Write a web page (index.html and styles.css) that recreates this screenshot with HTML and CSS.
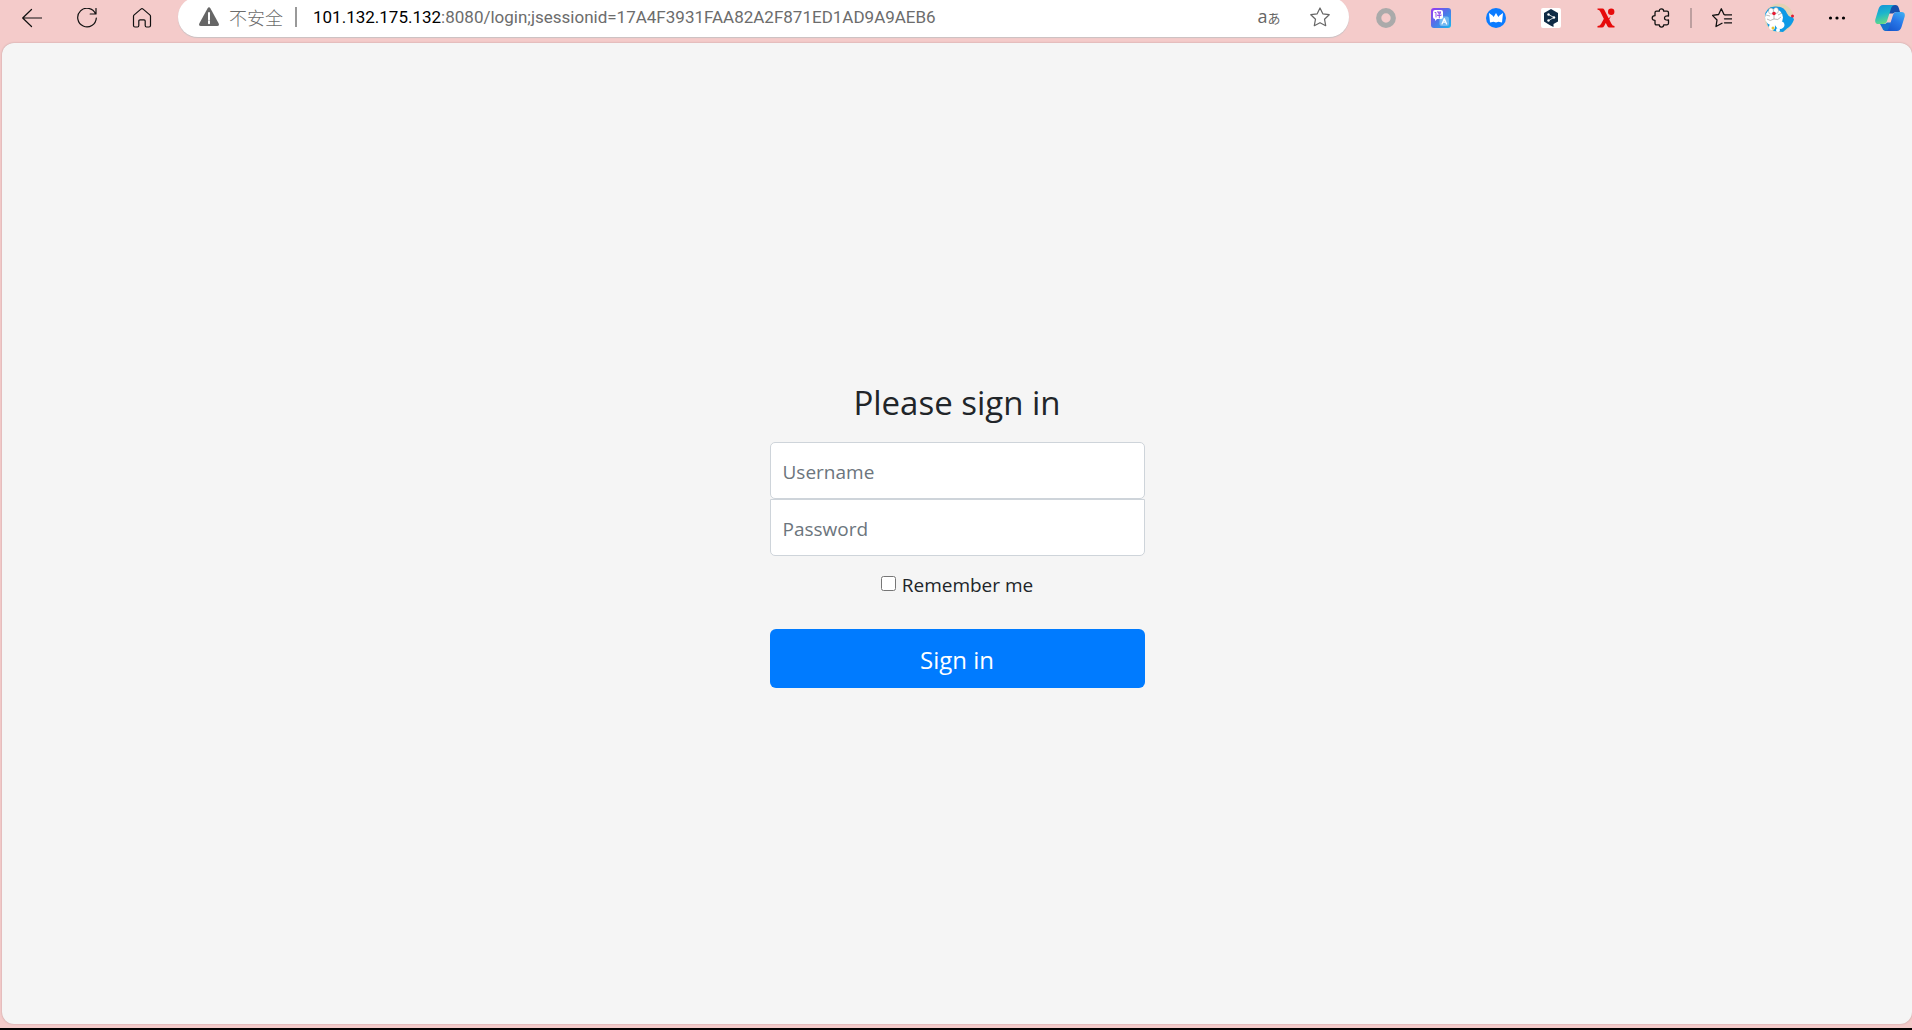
FILE: index.html
```html
<!DOCTYPE html>
<html lang="en">
<head>
<meta charset="UTF-8">
<meta name="viewport" content="width=device-width, initial-scale=1.0">
<title>Please sign in</title>
<link rel="stylesheet" href="styles.css">
</head>
<body>

    <header class="toolbar">
        <nav class="nav-buttons">
            <button type="button" class="tool" aria-label="Back">
                <svg class="icon" viewBox="0 0 20 20"><path d="M20 10H.7M9.500 1.500 .7 10l8.800 8.500"/></svg>
            </button>
            <button type="button" class="tool" aria-label="Refresh">
                <svg class="icon" viewBox="0 0 20 20"><path d="M18.600 6A9.300 9.300 0 1 0 19.300 10M19 .5V6h-5.800"/></svg>
            </button>
            <button type="button" class="tool" aria-label="Home">
                <svg class="icon" viewBox="0 0 20 20"><path d="M1.500 8.300Q1.500 7.500 2.200 6.900L8.900 1.100q1.100-.9 2.200 0l6.700 5.800q.7.600.7 1.400V17.500q0 1.500-1.500 1.500h-2.500q-1.300 0-1.300-1.500V13q0-1.200-1.200-1.200H8q-1.200 0-1.200 1.200v4.500Q6.800 19 5.500 19H3q-1.500 0-1.500-1.500z"/></svg>
            </button>
        </nav>

        <div class="address-bar">
            <svg class="icon warning" viewBox="0 0 20 20"><path fill="#666" stroke="none" d="M8.500 1.500q1.500-2.300 3 0l8.200 15q.9 2.500-1.500 2.500H1.800q-2.400 0-1.500-2.500z"/><path stroke="#fff" stroke-width="2" d="M10 6v6.500M10 14.200v2"/></svg>
            <span class="insecure">不安全</span>
            <span class="separator"></span>
            <span class="url"><span class="host">101.132.175.132</span>:8080/login;jsessionid=17A4F3931FAA82A2F871ED1AD9A9AEB6</span>
            <button type="button" class="tool translate" aria-label="Translate"><span class="latin">a</span><span class="kana">あ</span></button>
            <button type="button" class="tool" aria-label="Add to favorites">
                <svg class="icon" viewBox="0 0 20 20"><path stroke="#666" d="M10 1l2.800 5.800 6.400.9-4.700 4.500 1.200 6.500L10 15.700l-5.700 3 1.200-6.500L.8 7.700l6.400-.9z"/></svg>
            </button>
        </div>

        <div class="extensions">
            <button type="button" class="tool" aria-label="Recorder">
                <svg class="icon" viewBox="0 0 20 20"><circle cx="10" cy="10" r="7.300" stroke="#aaa" stroke-width="5.200"/></svg>
            </button>
            <button type="button" class="tool" aria-label="Page translator">
                <svg class="icon" viewBox="0 0 20 20" stroke="none">
                    <defs><linearGradient id="tr" x2="1" y2="1"><stop stop-color="#9b35f2"/><stop offset=".5" stop-color="#4c77e8"/><stop offset="1" stop-color="#18b9ee"/></linearGradient></defs>
                    <rect width="20" height="20" rx="3" fill="url(#tr)"/>
                    <rect x="8.500" y="8.500" width="9.500" height="9.500" rx="2" fill="#74b9f0"/>
                    <path fill="none" stroke="#fff" d="M11 16l2.300-5.500L15.600 16M12 14.200h2.700"/>
                    <path fill="#fff" d="M4 2h6q2 0 2 2v5q0 2-2 2H6l-2 2v-2q-2 0-2-2V4q0-2 2-2z"/>
                    <path fill="none" stroke="#8a43e8" stroke-width=".9" d="M4 4.500h1v4.500M6.500 4H10L7 6.200M7 4l3 2.200M6.500 7.500H10M8.300 6v4"/>
                </svg>
            </button>
            <button type="button" class="tool" aria-label="Crown">
                <svg class="icon" viewBox="0 0 20 20" stroke="none"><circle cx="10" cy="10" r="10" fill="#0a7bff"/><path fill="#fff" d="M3 5l3.500 2.500 1.200 1.500L10 5l2.300 4 1.200-1.500L17 5l-1 9.500-3.500-.8-2.500.8-2.500-.8-3.500.8z"/></svg>
            </button>
            <button type="button" class="tool" aria-label="Reader">
                <svg class="icon" viewBox="0 0 20 20" stroke="none"><rect width="20" height="20" rx="2" fill="#fff"/><path fill="#0f2b46" d="M10 1l7 4v8.500L12.500 16v3L9 17.200 3 13.500V5z"/><path fill="none" stroke="#fff" stroke-width=".8" d="M7.500 6.500l5.500 3-5.500 3"/><circle cx="7.500" cy="6.500" r="1.200" fill="#fff"/><circle cx="13" cy="9.500" r="1.200" fill="#fff"/><circle cx="7.500" cy="12.500" r="1.200" fill="#fff"/></svg>
            </button>
            <button type="button" class="tool" aria-label="Selector">
                <svg class="icon" viewBox="0 0 20 20" stroke="none"><path fill="#e60b0b" d="M1.500.5h5q1.200 0 1.800 1.200l7 13.800q1.200 2.500 3.200 2.500v1.500h-5q-1.500 0-2.200-1.500L4.500 4Q3.300 1.500 1.500 1.800zM8 10.500l2 4-1.800 3.500q-.8 1.500-2.400 1.500H1.500V18Q4 18 5 16zM12.500 10.500l2.500-2.500-2 4z"/><circle cx="15.200" cy="3.700" r="3.200" fill="#e60b0b"/></svg>
            </button>
            <button type="button" class="tool" aria-label="Extensions">
                <svg class="icon" viewBox="0 0 20 20"><path stroke-width="1.300" d="M5.500 3.200h2.800Q8.300.8 10.500.8T12.700 3.200H16q1.500 0 1.500 1.500V8q-4-.5-4 2t4 2v3.300q0 1.500-1.500 1.500h-3.300q0 2.400-2.200 2.400T8.300 16.800H5.500q-1.500 0-1.500-1.500V12.300Q1.200 12.300 1.200 10T4 7.700v-3Q4 3.200 5.500 3.200z"/></svg>
            </button>
            <span class="divider"></span>
            <button type="button" class="tool" aria-label="Favorites">
                <svg class="icon" viewBox="0 0 20 20"><path stroke-width="1.300" d="M13 7 12 6.500 9.300.8 6.600 6.500.5 7.400 5 12l-1 6.500 6-3.300M13 6.800h7M12.500 10.800H20M12.500 14.800H20"/></svg>
            </button>
            <button type="button" class="tool profile" aria-label="Profile">
                <svg class="avatar" viewBox="0 0 30 30" stroke="none">
                    <circle cx="15" cy="15" r="14.500" fill="#e4d2b5"/>
                    <path fill="#0d9ae6" d="M1 14Q1 4 11 3.500q9-.5 12 7 2.500 5 5.500 3l1.500 3q-2 6-7 9l-4 3.500-9-1-6-5z"/>
                    <ellipse cx="10" cy="14.500" rx="9" ry="8.500" fill="#fff"/>
                    <ellipse cx="16" cy="22" rx="4.500" ry="4" fill="#fff"/>
                    <circle cx="8" cy="24" r="3" fill="#fff"/>
                    <circle cx="14" cy="27" r="2" fill="#fff"/>
                    <ellipse cx="7" cy="8" rx="2.500" ry="3" fill="#fff" stroke="#777" stroke-width=".4"/>
                    <ellipse cx="12" cy="7.500" rx="2.500" ry="3" fill="#fff" stroke="#777" stroke-width=".4"/>
                    <circle cx="10" cy="10.500" r="1.800" fill="#e61b32"/>
                    <circle cx="28.500" cy="13" r="1.500" fill="#e61b32"/>
                    <circle cx="9" cy="25" r="1.500" fill="#e9c431"/>
                    <path fill="none" stroke="#777" stroke-width=".5" d="M10 12v4q-4 3-7 0M10 16q4 2 7-2M2 12l4 1M14 12l4-2"/>
                </svg>
            </button>
            <button type="button" class="tool more" aria-label="Settings and more">
                <svg class="icon" viewBox="0 0 20 20" fill="#000" stroke="none"><circle cx="3.500" cy="10" r="1.600"/><circle cx="10" cy="10" r="1.600"/><circle cx="16.500" cy="10" r="1.600"/></svg>
            </button>
            <button type="button" class="tool copilot" aria-label="Copilot">
                <svg class="avatar" viewBox="0 0 30 30" stroke="none">
                    <defs>
                        <linearGradient id="c1" x2=".3" y2="1"><stop stop-color="#178fd8"/><stop offset=".5" stop-color="#1bb5cd"/><stop offset="1" stop-color="#62da87"/></linearGradient>
                        <linearGradient id="c2" x1="1" x2=".3" y2="1"><stop stop-color="#40b5f4"/><stop offset=".5" stop-color="#2878e8"/><stop offset="1" stop-color="#1658cf"/></linearGradient>
                    </defs>
                    <path fill="#164fac" d="M15 2h5.500q2.500 0 3.300 3L25 9h-3q-3 0-4 1.500h-4z"/>
                    <path fill="#1774cd" d="M5 21h3q3 0 4-1.500h4L14 28h-4q-2 0-2.800-3z"/>
                    <path fill="url(#c1)" d="M8 2h12.500q-3.500 0-4.500 3.500L12 18q-1 3-4 3H3.500Q-.5 21 .3 16.500L3.500 6Q4.800 2 8 2z"/>
                    <path fill="url(#c2)" d="M22 28H9.500q3.500 0 4.500-3.500L18 12q1-3 4-3h4.500q4 0 3.200 4.500L26.500 24Q25.200 28 22 28z"/>
                </svg>
            </button>
        </div>
    </header>

    <main class="page">
        <form class="form-signin">
            <h1>Please sign in</h1>
            <input type="text" class="form-control" placeholder="Username" aria-label="Username">
            <input type="password" class="form-control password" placeholder="Password" aria-label="Password">
            <label class="remember"><input type="checkbox"> Remember me</label>
            <button type="submit" class="btn-primary">Sign in</button>
        </form>
    </main>

</body>
</html>
```

FILE: styles.css
```css
* {
    box-sizing: border-box;
}

body {
    margin: 0;
    height: 100vh;
    display: flex;
    flex-direction: column;
    overflow: hidden;
    background: #f4cbca;
    border-bottom: 2px solid #000;
    font-family: "Segoe UI", "Open Sans", "Noto Sans", "Noto Sans CJK SC", sans-serif;
    color: #212529;
}

button,
input {
    font-family: inherit;
}

/* browser toolbar */
.toolbar {
    display: flex;
    height: 46px;
    flex-shrink: 0;
    margin-top: -3px;
    padding-left: 4px;
}

.nav-buttons,
.extensions {
    display: flex;
    align-items: center;
    height: 42px;
}

.tool {
    display: flex;
    align-items: center;
    justify-content: center;
    width: 55px;
    height: 36px;
    padding: 0;
    border: 0;
    background: none;
}

.icon {
    width: 20px;
    height: 20px;
    fill: none;
    stroke: #111;
    stroke-width: 1.2;
    stroke-linecap: round;
    stroke-linejoin: round;
}

.icon[fill] {
    fill: #000;
}

.icon[stroke] {
    stroke: none;
}

.address-bar {
    flex: 1;
    display: flex;
    align-items: center;
    height: 40px;
    margin: 0 9px;
    padding-left: 21px;
    padding-right: 2px;
    border-radius: 20px;
    background: #fff;
    box-shadow: 0 1px 1px #c9c1c3;
    color: #6c6c6c;
    font-size: 17px;
}

.insecure {
    margin-left: 10px;
    font-family: "Noto Sans CJK SC", sans-serif;
    font-size: 18px;
    font-weight: 300;
}

.separator {
    width: 2px;
    height: 20px;
    margin: 0 16px 0 12px;
    background: #999;
}

.url {
    flex: 1;
    font-family: "Segoe UI", Roboto, sans-serif;
    white-space: nowrap;
}

.host {
    color: #000;
}

.translate {
    width: 46px;
    height: auto;
    color: #666;
    align-items: baseline;
    line-height: 24px;
}

.latin {
    font-size: 18px;
}

.kana {
    font-family: "Noto Sans CJK JP", sans-serif;
    font-size: 13px;
}

.divider {
    width: 2px;
    height: 20px;
    margin: 0 2px;
    background: #bd9f9f;
}

.avatar {
    width: 30px;
    height: 30px;
}

.profile {
    width: 60px;
}

.copilot {
    width: 48px;
    padding-left: 4px;
}

/* sign in page */
.page {
    flex: 1;
    display: flex;
    align-items: center;
    justify-content: center;
    margin: 0 0 4px 2px;
    border-radius: 12px;
    background: #f5f5f5;
    box-shadow: 0 0 2px #b99;
}

.form-signin {
    display: flex;
    flex-direction: column;
    width: 100%;
    max-width: 413px;
    padding: 22px 19px 19px;
    text-align: center;
}

h1 {
    margin: 0 0 18px;
    font-size: 33px;
    line-height: 42px;
    font-weight: 400;
}

.form-control {
    width: 100%;
    height: 57px;
    padding: 14px 12px 12px;
    border: 1px solid #ced4da;
    border-radius: 5px;
    background: #fff;
    font-size: 19px;
}

.form-control::placeholder {
    color: #6c757d;
}

.password {
    margin-bottom: 12px;
    border-top-left-radius: 0;
    border-top-right-radius: 0;
}

.remember {
    display: flex;
    align-items: center;
    justify-content: center;
    gap: 6px;
    margin-bottom: 27px;
    font-size: 19px;
    line-height: 34px;
}

.remember input {
    width: 15px;
    height: 15px;
    margin: 0 0 4px;
}

.btn-primary {
    width: 100%;
    height: 59px;
    padding: 2px 0 0;
    border: 0;
    border-radius: 6px;
    background: #007bff;
    color: #fff;
    font-size: 24px;
}
```
